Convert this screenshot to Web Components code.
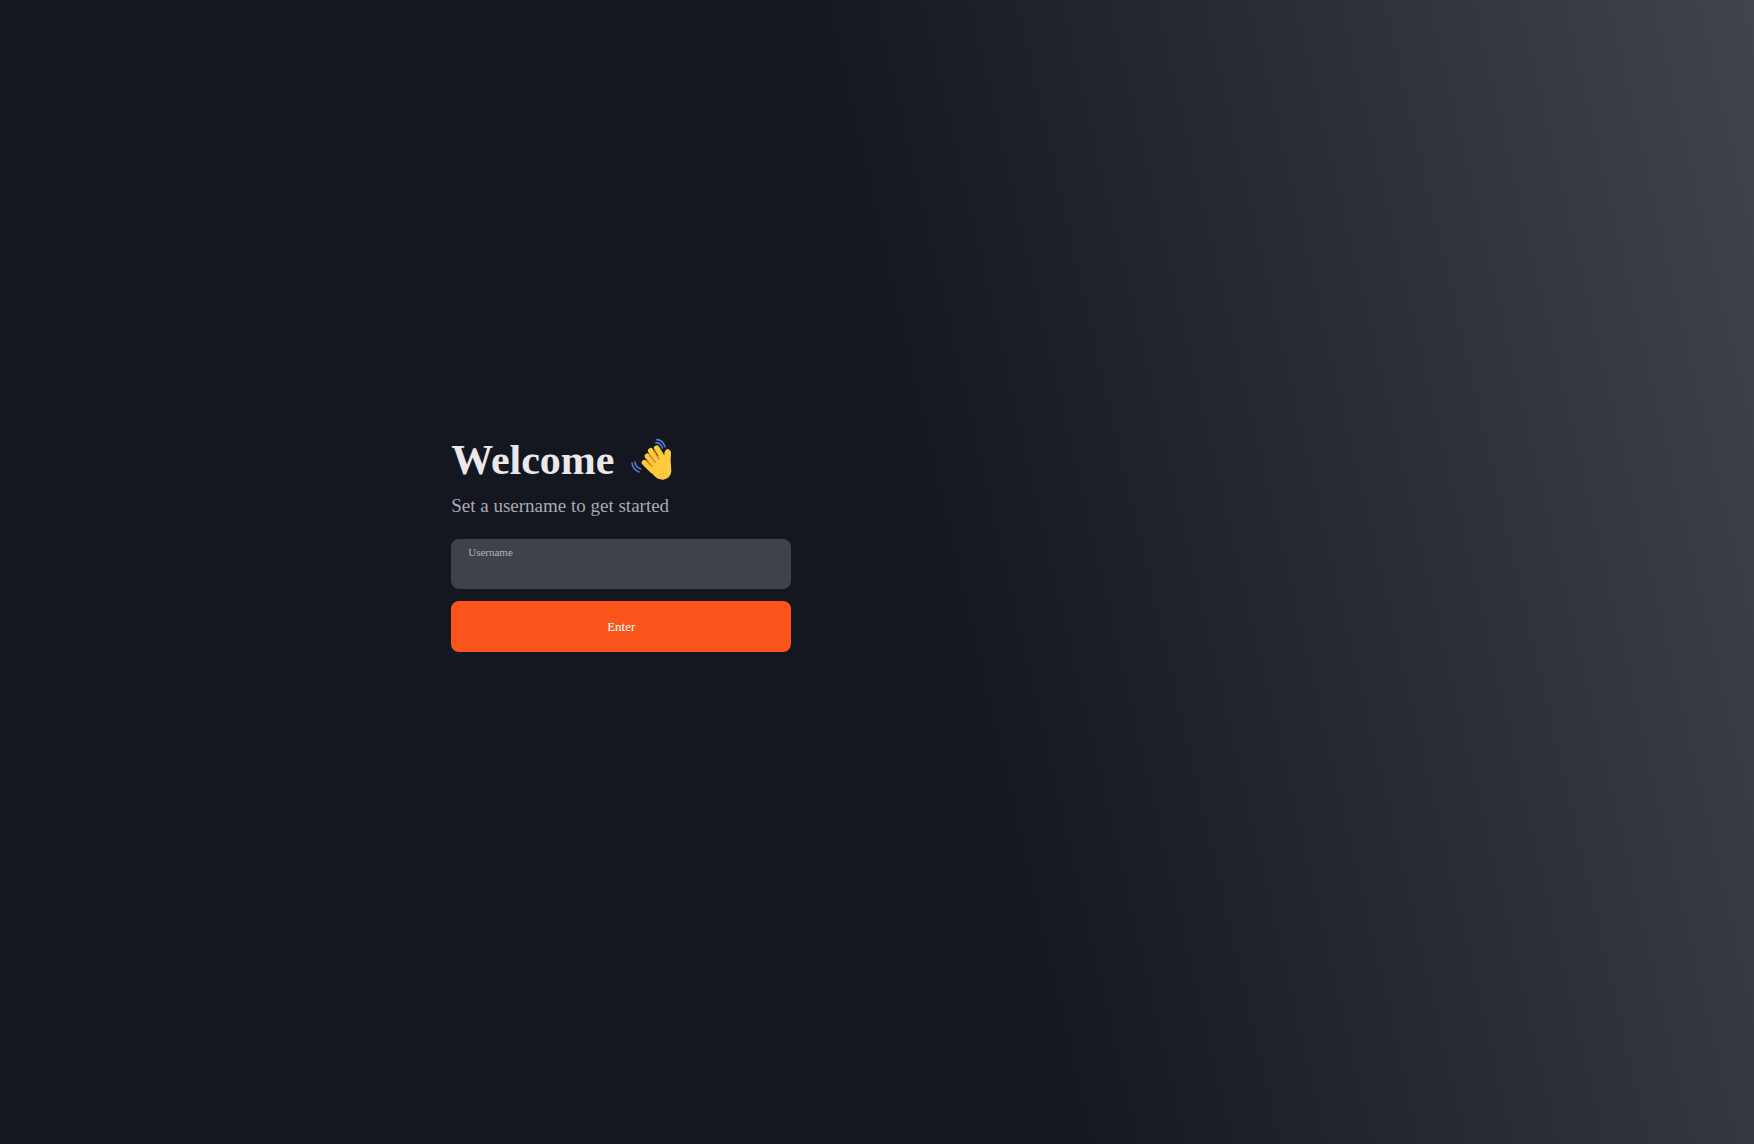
<!DOCTYPE html>
<html lang="en">
<head>
<meta charset="utf-8">
<meta name="viewport" content="width=device-width, initial-scale=1">
<title>Welcome</title>
<style>
  body { margin: 0; font-family: "Liberation Serif", "Times New Roman", serif; }
</style>
</head>
<body>
<welcome-page>
  <welcome-heading>
    Welcome
    <span slot="subtitle">Set a username to get started</span>
  </welcome-heading>
  <username-form label="Username">Enter</username-form>
</welcome-page>

<script>
  class WelcomePage extends HTMLElement {
    constructor() {
      super();
      this.attachShadow({ mode: "open" }).innerHTML = `
        <style>
          :host {
            display: grid;
            grid-template-columns: 17fr 7fr;
            min-height: 100vh;
            background: linear-gradient(77deg, #141620 52%, #41444c 100%);
            color: #e9e9ec;
          }
          main {
            display: flex;
            flex-direction: column;
            align-items: center;
            justify-content: center;
            padding-bottom: 56px;
          }
          section {
            display: flex;
            flex-direction: column;
            gap: 21px;
            width: 100%;
            max-width: 340px;
          }
        </style>
        <main><section><slot></slot></section></main>`;
    }
  }

  class WavingHand extends HTMLElement {
    constructor() {
      super();
      this.attachShadow({ mode: "open" }).innerHTML = `
        <style>
          :host { display: block; width: 44px; height: 44px; }
          svg { display: block; width: 100%; height: 100%; }
        </style>
        <svg viewBox="0 0 132 132" aria-hidden="true" fill="none" stroke-linecap="round" stroke-linejoin="round">
          <path d="M60 72 L58 94 L72 110 Q84 124 100 123 Q121 119 122 98 L120 70 L121 43 Q117 33 110 36 Q103 41 105 60 L96 50Z" fill="#ffca3e" stroke="#ffca3e" stroke-width="4"/>
          <g stroke="#ffca3e" stroke-width="16">
            <path d="M80 30 L103 67"/>
            <path d="M62 38 L87 76"/>
            <path d="M52 54 L77 86"/>
            <path d="M43 74 L67 98"/>
          </g>
          <g stroke="#d08a1e" stroke-width="4">
            <path d="M72 39 L87 63"/>
            <path d="M58 51 L76 73"/>
            <path d="M49 68 L66 84"/>
          </g>
          <g stroke="#4f80d6" stroke-width="5">
            <path d="M81 5 Q98 6 105 26"/>
            <path d="M78 14 Q91 14 97 30"/>
            <path d="M6 75 Q9 96 27 102"/>
            <path d="M15 72 Q17 88 32 93"/>
          </g>
        </svg>`;
    }
  }

  class WelcomeHeading extends HTMLElement {
    constructor() {
      super();
      this.attachShadow({ mode: "open" }).innerHTML = `
        <style>
          :host { display: flex; flex-direction: column; gap: 10px; }
          .title { display: flex; align-items: center; gap: 16px; }
          h1 { margin: 0; font-size: 42px; line-height: 48px; font-weight: 700; }
          p { margin: 0; font-size: 19px; line-height: 24px; color: #a9abb1; }
        </style>
        <div class="title"><h1><slot></slot></h1><waving-hand></waving-hand></div>
        <p><slot name="subtitle"></slot></p>`;
    }
  }

  class UsernameForm extends HTMLElement {
    constructor() {
      super();
      this.attachShadow({ mode: "open" }).innerHTML = `
        <style>
          :host { display: block; }
          form { display: flex; flex-direction: column; gap: 12px; }
          .field {
            display: flex;
            flex-direction: column;
            box-sizing: border-box;
            height: 50px;
            padding: 6px 17px;
            border-radius: 8px;
            background: #3f414b;
          }
          label { font-size: 11px; line-height: 14px; color: #b5b6bc; }
          input {
            flex: 1;
            min-width: 0;
            min-height: 0;
            padding: 0;
            border: 0;
            outline: 0;
            background: none;
            color: inherit;
            font: inherit;
            font-size: 16px;
          }
          button {
            height: 51px;
            padding: 0;
            border: 0;
            border-radius: 8px;
            background: #fc551c;
            color: #ffffff;
            font: inherit;
            font-size: 13px;
            cursor: pointer;
          }
        </style>
        <form>
          <div class="field">
            <label for="username"></label>
            <input id="username" type="text" autocomplete="off">
          </div>
          <button type="submit"><slot></slot></button>
        </form>`;
    }
    connectedCallback() {
      this.shadowRoot.querySelector("label").textContent = this.getAttribute("label");
      this.shadowRoot.querySelector("form").addEventListener("submit", (event) => event.preventDefault());
    }
  }

  customElements.define("waving-hand", WavingHand);
  customElements.define("welcome-heading", WelcomeHeading);
  customElements.define("username-form", UsernameForm);
  customElements.define("welcome-page", WelcomePage);
</script>
</body>
</html>
